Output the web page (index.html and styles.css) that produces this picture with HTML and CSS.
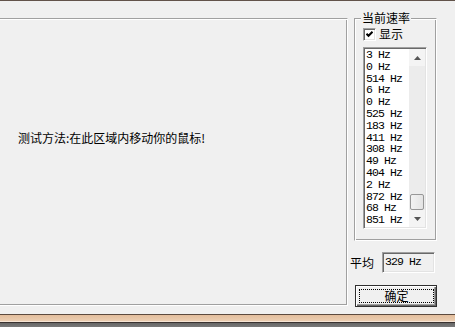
FILE: index.html
```html
<!DOCTYPE html>
<html lang="zh-CN">
<head>
<meta charset="utf-8">
<title>鼠标速率测试</title>
<link rel="stylesheet" href="styles.css">
</head>
<body>
<div class="topline"></div>
<div class="main">
  <div class="panel">
    <p class="hint">测试方法:在此区域内移动你的鼠标!</p>
  </div>
  <div class="side">
    <div class="group">
      <div class="group-title">当前速率</div>
      <label class="check">
        <span class="box"><svg width="7" height="7" viewBox="0 0 7 7"><polyline points="0.5,2.8 2.5,4.8 6.5,0.8" fill="none" stroke="#000" stroke-width="2"/></svg></span>
        <span class="check-label">显示</span>
      </label>
      <div class="listbox">
        <ul class="items">
          <li>3 Hz</li>
          <li>0 Hz</li>
          <li>514 Hz</li>
          <li>6 Hz</li>
          <li>0 Hz</li>
          <li>525 Hz</li>
          <li>183 Hz</li>
          <li>411 Hz</li>
          <li>308 Hz</li>
          <li>49 Hz</li>
          <li>404 Hz</li>
          <li>2 Hz</li>
          <li>872 Hz</li>
          <li>68 Hz</li>
          <li>851 Hz</li>
        </ul>
        <div class="scrollbar">
          <div class="sb-btn"><svg width="7" height="4" viewBox="0 0 7 4"><polygon points="3.5,0 7,4 0,4" fill="#555"/></svg></div>
          <div class="sb-track"><div class="thumb"></div></div>
          <div class="sb-btn"><svg width="7" height="4" viewBox="0 0 7 4"><polygon points="0,0 7,0 3.5,4" fill="#555"/></svg></div>
        </div>
      </div>
    </div>
    <div class="avg">
      <span class="avg-label">平均</span>
      <div class="field">329 Hz</div>
    </div>
    <button class="ok" type="button"><span class="focus">确定</span></button>
  </div>
</div>
<div class="taskbar"></div>
</body>
</html>
```
FILE: styles.css
```css
* { box-sizing: border-box; }
html, body { margin: 0; padding: 0; }
body {
  width: 455px;
  height: 327px;
  overflow: hidden;
  background: #f0f0f0;
  font-family: "Noto Sans CJK SC", "Noto Sans", sans-serif;
  font-size: 12px;
  color: #000;
}
.topline { height: 1px; background: #62534a; }
.main { display: flex; height: 313px; }
.panel {
  margin: 17px 0 0 -2px;
  width: 350px;
  height: 288px;
  border: 1px solid;
  border-color: #a0a0a0 #fff #fff #a0a0a0;
  box-shadow: inset 1px 1px #fff, inset -1px -1px #a0a0a0;
  padding: 112px 0 0 19px;
}
.hint { margin: 0; line-height: 14px; white-space: nowrap; }
.side { display: flex; flex-direction: column; align-items: flex-start; }
.group {
  margin: 17px 0 0 6px;
  width: 83px;
  height: 223px;
  border: 1px solid;
  border-color: #a0a0a0 #fff #fff #a0a0a0;
  box-shadow: inset 1px 1px #fff, inset -1px -1px #a0a0a0;
  display: flex;
  flex-direction: column;
  align-items: flex-start;
}
.group-title {
  margin: -8px 0 0 6px;
  padding: 0 1px;
  line-height: 14px;
  background: #f0f0f0;
}
.check {
  margin: 2px 0 0 8px;
  display: flex;
  align-items: center;
  gap: 3px;
  height: 14px;
  line-height: 14px;
}
.box {
  width: 13px;
  height: 13px;
  background: #fff;
  border: 1px solid;
  border-color: #a0a0a0 #fff #fff #a0a0a0;
  box-shadow: inset 1px 1px #696969, inset -1px -1px #e3e3e3;
  display: flex;
  align-items: center;
  justify-content: center;
}
.box svg { display: block; }
.listbox {
  margin: 6px 0 0 8px;
  width: 64px;
  height: 182px;
  background: #fff;
  border: 1px solid;
  border-color: #a0a0a0 #fff #fff #a0a0a0;
  box-shadow: inset 1px 1px #696969, inset -1px -1px #e3e3e3;
  padding: 1px;
  display: flex;
}
.items {
  list-style: none;
  margin: 0;
  padding: 0 0 0 1px;
  flex: 1;
  overflow: hidden;
  font-family: "Liberation Mono", "DejaVu Sans Mono", monospace;
  font-size: 11.5px;
  letter-spacing: -0.9px;
  line-height: 11.8px;
}
.items li { white-space: nowrap; }
.scrollbar {
  width: 16px;
  display: flex;
  flex-direction: column;
  background: #f4f4f4;
}
.sb-btn {
  height: 17px;
  display: flex;
  align-items: center;
  justify-content: center;
}
.sb-btn svg { display: block; }
.sb-track {
  flex: 1;
  display: flex;
  flex-direction: column;
  justify-content: flex-end;
  background: #ececec;
}
.thumb {
  height: 16px;
  margin: 0 1px;
  border: 1px solid #979797;
  border-radius: 2px;
  background: linear-gradient(to right, #f2f2f2, #e4e4e4);
}
.avg {
  margin: 11px 0 0 2px;
  display: flex;
  align-items: center;
  gap: 8px;
}
.avg-label { width: 24px; line-height: 14px; white-space: nowrap; }
.field {
  width: 53px;
  height: 21px;
  border: 1px solid;
  border-color: #a0a0a0 #fff #fff #a0a0a0;
  box-shadow: inset 1px 1px #696969, inset -1px -1px #e3e3e3;
  background: #f0f0f0;
  padding: 2px 0 0 2px;
  font-family: "Liberation Mono", "DejaVu Sans Mono", monospace;
  font-size: 11.5px;
  letter-spacing: -0.9px;
  line-height: 14px;
  white-space: nowrap;
}
.ok {
  margin: 12px 0 0 7px;
  width: 82px;
  height: 22px;
  padding: 0;
  border: 1px solid #2e2e2e;
  background: #f0f0f0;
  box-shadow: inset 1px 1px #fff, inset -1px -1px #696969, inset -2px -2px #a0a0a0;
  font-family: "Noto Sans CJK SC", "Noto Sans", sans-serif;
  font-size: 12px;
  color: #000;
  display: flex;
}
.focus {
  flex: 1;
  margin: 3px 2px 3px 3px;
  border: 1px dotted #000;
  display: flex;
  align-items: center;
  justify-content: center;
  line-height: 12px;
}
.taskbar {
  height: 13px;
  border-top: 1px solid #5c4a3e;
  background: linear-gradient(to bottom, #e2bd9c 0, #ecceb2 6px, #f7e6d6 6px, #f7e6d6 7px, #3a3230 7px, #3a3230 8px, #666 8px, #7a7a7a 100%);
}
```
